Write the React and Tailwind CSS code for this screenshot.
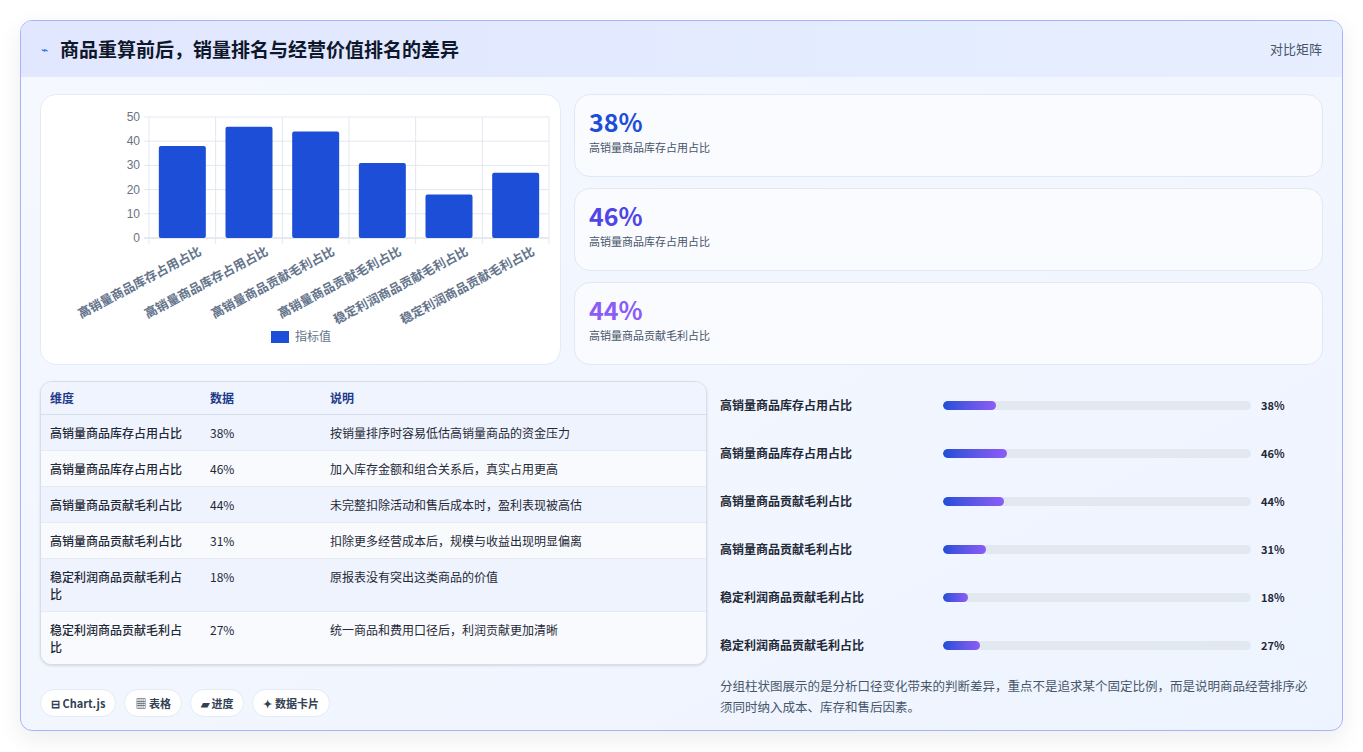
const font = { fontFamily: '"Noto Sans CJK SC", "Noto Sans", sans-serif' };

const rows = [
  ["高销量商品库存占用占比", 38, "按销量排序时容易低估高销量商品的资金压力"],
  ["高销量商品库存占用占比", 46, "加入库存金额和组合关系后，真实占用更高"],
  ["高销量商品贡献毛利占比", 44, "未完整扣除活动和售后成本时，盈利表现被高估"],
  ["高销量商品贡献毛利占比", 31, "扣除更多经营成本后，规模与收益出现明显偏离"],
  ["稳定利润商品贡献毛利占比", 18, "原报表没有突出这类商品的价值"],
  ["稳定利润商品贡献毛利占比", 27, "统一商品和费用口径后，利润贡献更加清晰"],
];

const stats = [
  ["38%", "高销量商品库存占用占比", "text-[#1d4ed8]"],
  ["46%", "高销量商品库存占用占比", "text-[#4f46e5]"],
  ["44%", "高销量商品贡献毛利占比", "text-[#8b5cf6]"],
];

function Chart() {
  const x0 = 108, x1 = 508, yTop = 22, yBot = 143;
  const step = (x1 - x0) / 6;
  const h = yBot - yTop;
  return (
    <svg width="520" height="270" className="block">
      {[0, 10, 20, 30, 40, 50].map((v) => {
        const y = yBot - (v / 50) * h;
        return (
          <g key={v}>
            <line x1={x0 - 5} x2={x1} y1={y} y2={y} stroke={v === 0 ? "#cbd5e1" : "#e2e8f0"} />
            <text x={x0 - 9} y={y + 4} textAnchor="end" fontSize="12" fill="#6b7280" fontFamily="Liberation Sans, sans-serif">{v}</text>
          </g>
        );
      })}
      {[0, 1, 2, 3, 4, 5, 6].map((i) => (
        <line key={i} x1={x0 + i * step} x2={x0 + i * step} y1={yTop} y2={yBot + 6} stroke="#e2e8f0" />
      ))}
      {rows.map((r, i) => {
        const bh = (r[1] / 50) * h;
        const cx = x0 + step * i + step / 2;
        return (
          <g key={i}>
            <rect x={cx - 23.5} y={yBot - bh} width="47" height={bh} rx="2" fill="#1d4ed8" />
            <text x={cx + 20} y={yBot + 16} textAnchor="end" fontSize="12.5" fontWeight="600" fill="#64748b" transform={`rotate(-28 ${cx + 20} ${yBot + 16})`} style={font}>{r[0]}</text>
          </g>
        );
      })}
      <rect x="230" y="236" width="18" height="12" fill="#1d4ed8" />
      <text x="254" y="246" fontSize="12" fill="#64748b" style={font}>指标值</text>
    </svg>
  );
}

export default function App() {
  return (
    <div className="w-[1363px] h-[752px] bg-white p-5" style={font}>
      <div className="h-[711px] rounded-xl border border-[#a5b4fc] bg-gradient-to-br from-[#f5f8ff] to-[#eef4ff] overflow-hidden shadow-[0_8px_24px_rgba(15,23,42,0.08)]">
        <div className="h-[56px] flex items-center justify-between px-5 bg-gradient-to-r from-[#e0e7ff] to-[#e6eeff]">
          <div className="flex items-center gap-3">
            <span className="text-[#2563eb] text-xs">⌁</span>
            <h1 className="text-[19px] font-bold text-[#0f172a]">商品重算前后，销量排名与经营价值排名的差异</h1>
          </div>
          <span className="text-[13px] text-[#475569]">对比矩阵</span>
        </div>
        <div className="px-[19px] pt-[17px]">
          <div className="flex gap-[13px]">
            <div className="w-[521px] h-[271px] rounded-2xl bg-white border border-[#e5eaf5]">
              <Chart />
            </div>
            <div className="flex-1 flex flex-col gap-[11px]">
              {stats.map(([v, l, c], i) => (
                <div key={i} className="h-[83px] rounded-2xl border border-[#e2e8f0] bg-[#fafbff] px-[14px] pt-[10px]">
                  <div className={`text-[25px] font-bold leading-[32px] ${c}`}>{v}</div>
                  <div className="text-[11px] text-[#475569] mt-[2px]">{l}</div>
                </div>
              ))}
            </div>
          </div>
          <div className="flex gap-[13px] mt-4">
            <div className="w-[667px]">
              <div className="rounded-xl border border-[#d6deec] overflow-hidden bg-white shadow-sm">
                <div className="grid grid-cols-[160px_120px_1fr] h-[33px] items-center px-[9px] bg-[#eff4ff] border-b border-[#d6deec] text-[12px] font-semibold text-[#1e3a8a]">
                  <span>维度</span><span>数据</span><span>说明</span>
                </div>
                {rows.map((r, i) => (
                  <div key={i} className={`grid grid-cols-[160px_120px_1fr] px-[9px] py-[9px] text-[12px] text-[#1f2937] leading-[17px] border-b border-[#e5eaf3] last:border-b-0 ${i % 2 === 0 ? "bg-[#eef3fd]" : "bg-[#f8fafd]"}`}>
                    <span className="pr-6 font-medium">{r[0]}</span><span>{r[1]}%</span><span>{r[2]}</span>
                  </div>
                ))}
              </div>
              <div className="flex gap-[8px] mt-[24px]">
                {["⊟ Chart.js", "▦ 表格", "▰ 进度", "✦ 数据卡片"].map((t) => (
                  <span key={t} className="h-[28px] px-[10px] rounded-full bg-white border border-[#e5eaf5] text-[11px] font-semibold text-[#334155] flex items-center">{t}</span>
                ))}
              </div>
            </div>
            <div className="flex-1 pl-[0px]">
              {rows.map((r, i) => (
                <div key={i} className="h-[48px] flex items-center">
                  <span className="w-[223px] text-[12px] font-semibold text-[#1f2937]">{r[0]}</span>
                  <div className="w-[308px] h-[9px] rounded-full bg-[#e2e8f0] overflow-hidden">
                    <div className="h-full rounded-full bg-gradient-to-r from-[#1d4ed8] to-[#8b5cf6]" style={{ width: `${r[1] * 0.45}%` }} />
                  </div>
                  <span className="ml-[10px] text-[11px] font-bold text-[#1f2937]">{r[1]}%</span>
                </div>
              ))}
              <p className="mt-[6px] text-[12.5px] leading-[21px] text-[#475569] pr-2">分组柱状图展示的是分析口径变化带来的判断差异，重点不是追求某个固定比例，而是说明商品经营排序必须同时纳入成本、库存和售后因素。</p>
            </div>
          </div>
        </div>
      </div>
    </div>
  );
}
